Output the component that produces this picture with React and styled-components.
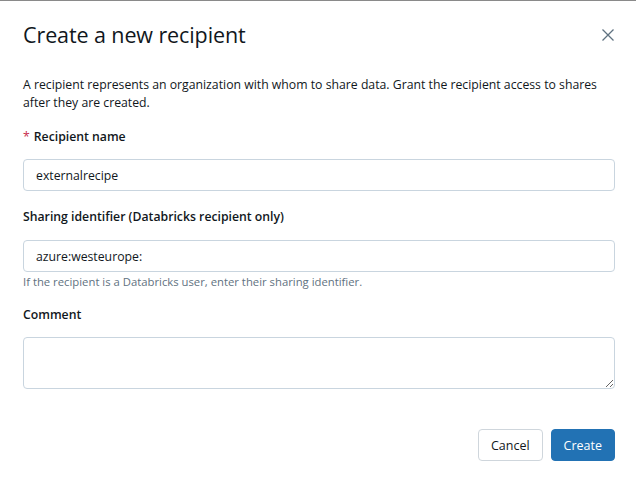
import React from 'react';
import styled, { createGlobalStyle } from 'styled-components';

const GlobalStyle = createGlobalStyle`
  html, body {
    margin: 0;
    padding: 0;
    background: #ffffff;
  }
  body {
    font-family: "Open Sans", "Noto Sans", sans-serif;
    color: #11171c;
  }
`;

const Modal = styled.div`
  width: 636px;
  height: 487px;
  box-sizing: border-box;
  border-top: 1px solid #8a8a8a;
  background: #ffffff;
  display: flex;
  flex-direction: column;
  padding: 0 21px 0 23px;
`;

const Header = styled.div`
  display: flex;
  align-items: center;
  justify-content: space-between;
  height: 68px;
`;

const Title = styled.h2`
  margin: -2px 0 0;
  font-size: 21.5px;
  font-weight: 400;
  color: #11171c;
  letter-spacing: -0.1px;
`;

const CloseButton = styled.button`
  border: none;
  background: none;
  padding: 0;
  width: 24px;
  height: 24px;
  display: flex;
  align-items: center;
  justify-content: center;
  color: #5f7281;
  cursor: pointer;
  margin-right: -5px;
`;

const Description = styled.p`
  margin: 7px 0 0;
  font-size: 12.25px;
  line-height: 18px;
  color: #11171c;
`;

const Field = styled.div`
  display: flex;
  flex-direction: column;
  margin-top: ${(p) => p.$top}px;
`;

const Label = styled.label`
  font-size: 12.25px;
  font-weight: 600;
  line-height: 18px;
  color: #11171c;
  margin-bottom: ${(p) => p.$gap || 14}px;
`;

const Required = styled.span`
  color: #c82d4c;
  font-weight: 400;
  margin-right: 4px;
`;

const Input = styled.input`
  box-sizing: border-box;
  height: 32px;
  width: 100%;
  border: 1px solid #c9d5df;
  border-radius: 4px;
  padding: 0 12px;
  font-family: inherit;
  font-size: 12.25px;
  color: #11171c;
  outline: none;
`;

const TextArea = styled.textarea`
  box-sizing: border-box;
  height: 52px;
  width: 100%;
  border: 1px solid #c9d5df;
  border-radius: 4px;
  padding: 6px 12px;
  font-family: inherit;
  font-size: 12.25px;
  outline: none;
  resize: vertical;
  display: block;
`;

const Hint = styled.div`
  font-size: 11.3px;
  line-height: 16px;
  color: #5f7281;
  margin-top: 2px;
`;

const Footer = styled.div`
  display: flex;
  justify-content: flex-end;
  gap: 8px;
  margin-top: 40px;
`;

const Button = styled.button`
  height: 32px;
  box-sizing: border-box;
  padding: 0 12px;
  border-radius: 4px;
  font-family: inherit;
  font-size: 12.5px;
  cursor: pointer;
  border: 1px solid ${(p) => (p.$primary ? '#2272b4' : '#cfd6dc')};
  background: ${(p) => (p.$primary ? '#2272b4' : '#ffffff')};
  color: ${(p) => (p.$primary ? '#ffffff' : '#11171c')};
`;

export default function App() {
  return (
    <>
      <GlobalStyle />
      <Modal>
        <Header>
          <Title>Create a new recipient</Title>
          <CloseButton aria-label="Close">
            <svg width="14" height="14" viewBox="0 0 14 14" fill="none">
              <path d="M1.5 1.5 L12.5 12.5 M12.5 1.5 L1.5 12.5" stroke="currentColor" strokeWidth="1.3" />
            </svg>
          </CloseButton>
        </Header>
        <Description>
          A recipient represents an organization with whom to share data. Grant the recipient access to shares
          after they are created.
        </Description>
        <Field $top={16}>
          <Label $gap={13}>
            <Required>*</Required>Recipient name
          </Label>
          <Input defaultValue="externalrecipe" />
        </Field>
        <Field $top={17}>
          <Label>Sharing identifier (Databricks recipient only)</Label>
          <Input defaultValue="azure:westeurope:" />
          <Hint>If the recipient is a Databricks user, enter their sharing identifier.</Hint>
        </Field>
        <Field $top={16}>
          <Label $gap={13}>Comment</Label>
          <TextArea />
        </Field>
        <Footer>
          <Button>Cancel</Button>
          <Button $primary>Create</Button>
        </Footer>
      </Modal>
    </>
  );
}
